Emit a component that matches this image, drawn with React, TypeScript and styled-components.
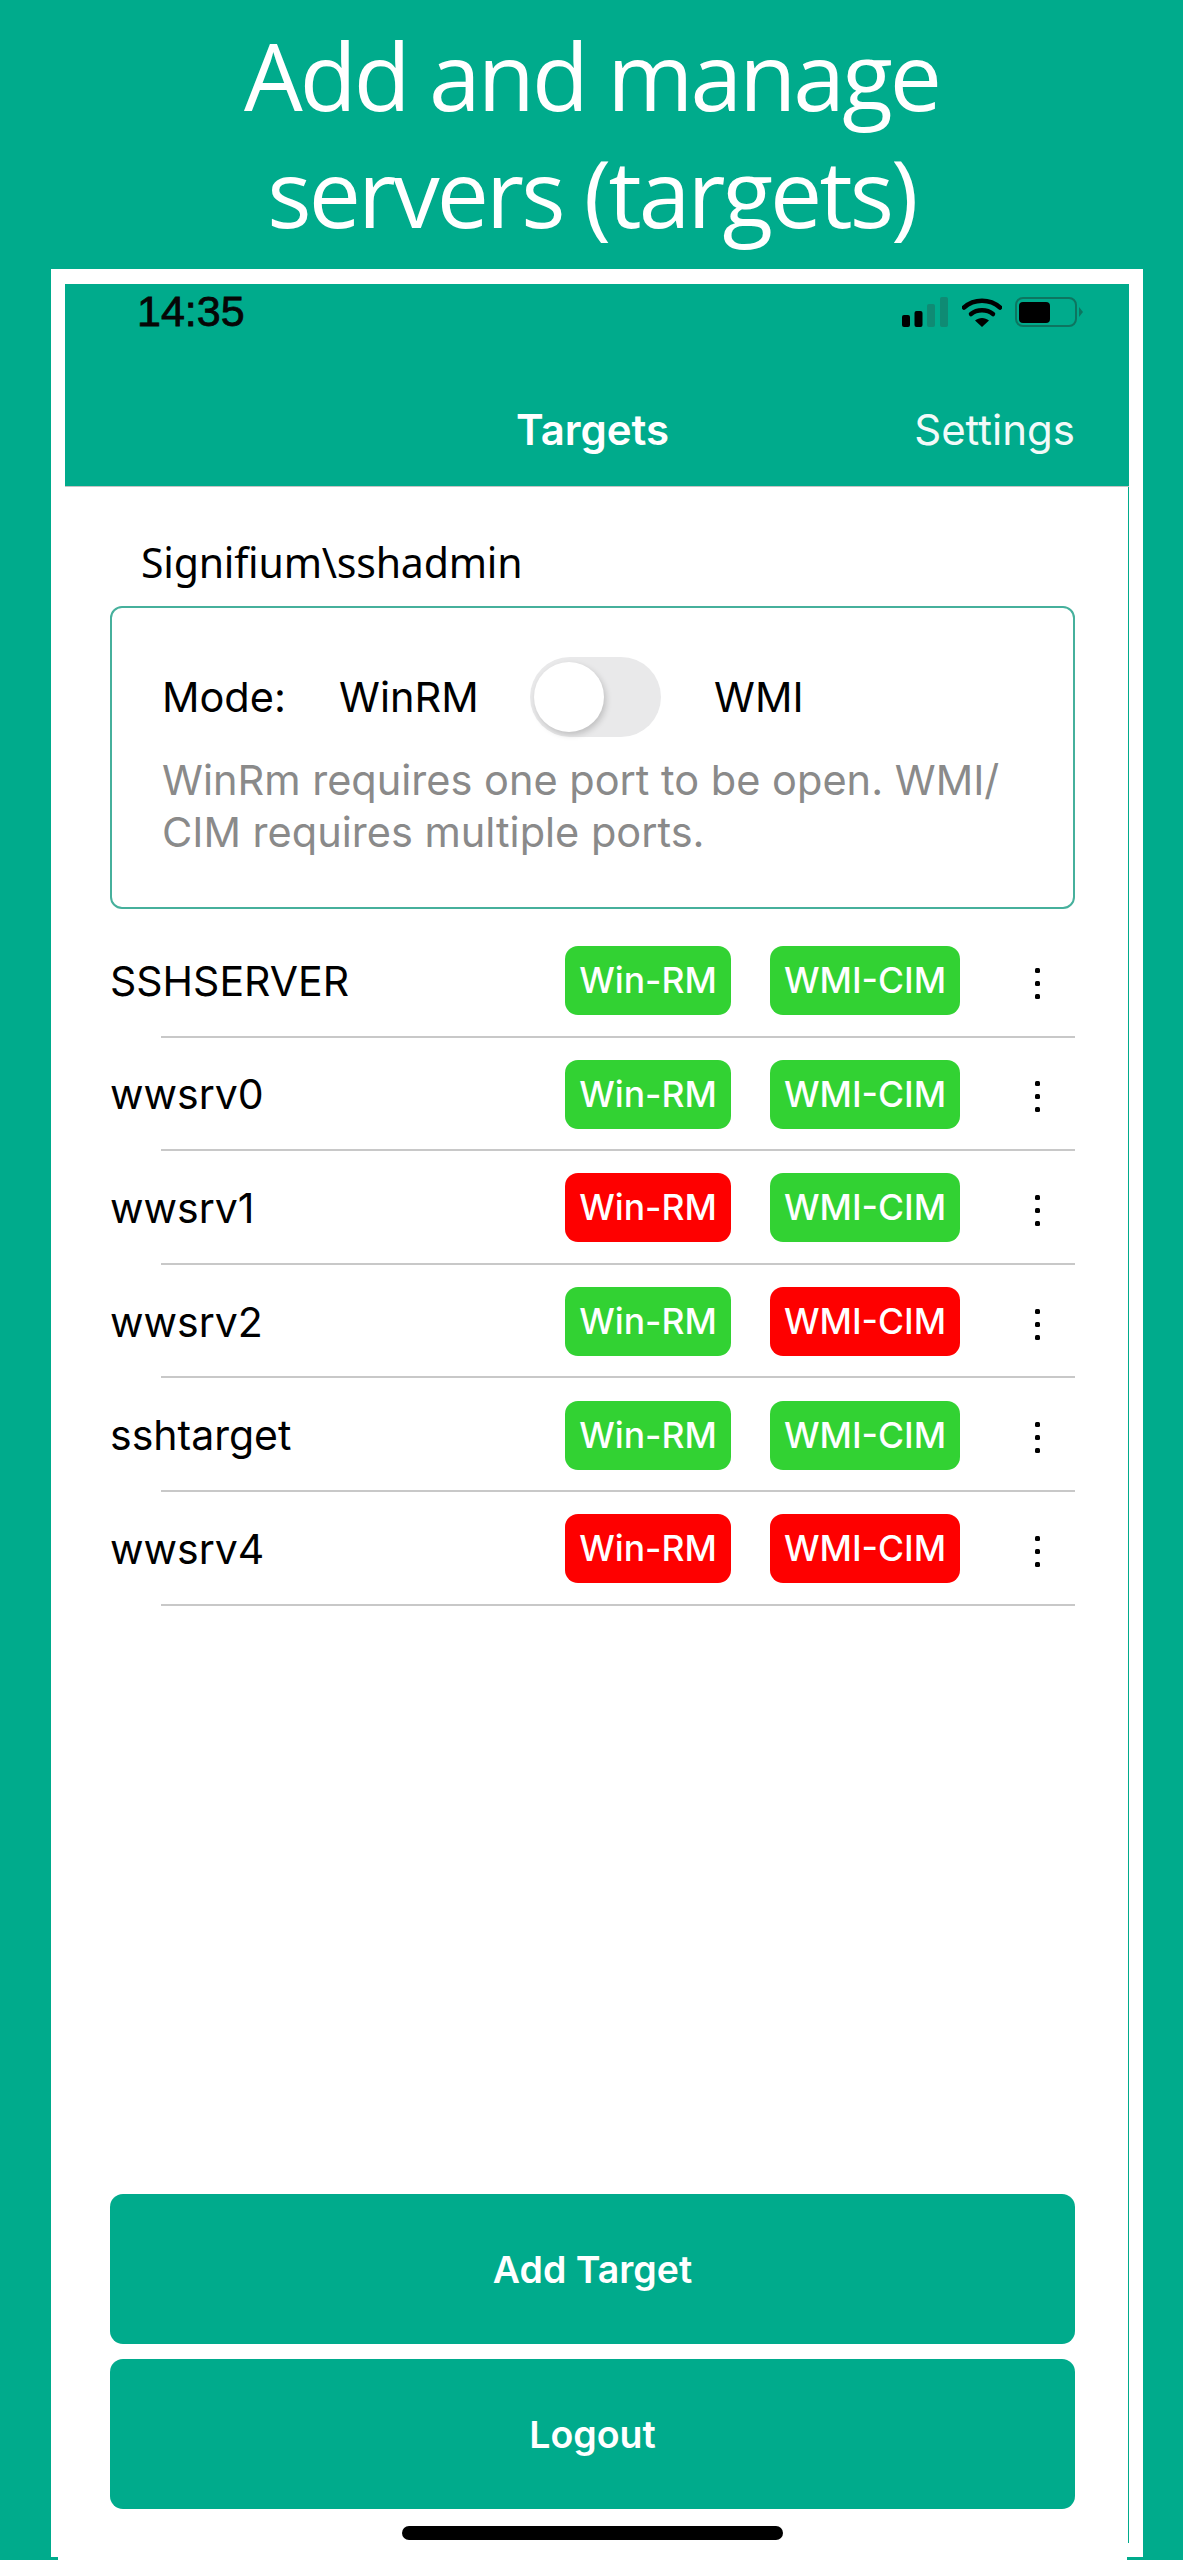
import React, { FC } from 'react';
import styled, { createGlobalStyle } from 'styled-components';

const teal = '#00ab8c';

const GlobalStyle = createGlobalStyle`
  html, body {
    margin: 0;
    padding: 0;
    background: ${teal};
  }
`;

const Page = styled.div`
  width: 1183px;
  height: 2560px;
  overflow: hidden;
  display: flex;
  flex-direction: column;
  background: ${teal};
`;

const Headline = styled.h1`
  margin: 0;
  height: 269px;
  padding-top: 17px;
  box-sizing: border-box;
  font-family: 'Open Sans', sans-serif;
  font-weight: 400;
  font-size: 93px;
  line-height: 117px;
  letter-spacing: -2.9px;
  color: #fff;
  text-align: center;
`;

const Frame = styled.div`
  position: relative;
  flex: 1;
  margin: 0 40px 0 51px;
  border-top: 15px solid #fff;
  border-left: 14px solid #fff;
  border-right: 14px solid #fff;
  display: flex;
  flex-direction: column;
  background: #fff;
  min-height: 0;

  &::before,
  &::after {
    content: '';
    position: absolute;
    bottom: 0;
    height: 3px;
    background: ${teal};
  }

  &::before {
    left: -14px;
    width: 7px;
  }

  &::after {
    right: -14px;
    width: 16px;
  }
`;

const AppBar = styled.header`
  height: 203px;
  flex: none;
  display: flex;
  flex-direction: column;
  background: ${teal};
  border-bottom: 1px solid #c4c4c4;
  box-sizing: border-box;
`;

const StatusBar = styled.div`
  display: flex;
  align-items: center;
  justify-content: space-between;
  padding: 6px 46px 0 72px;
  height: 44px;
`;

const Clock = styled.span`
  font-family: 'Liberation Sans', sans-serif;
  font-size: 43px;
  font-weight: 400;
  line-height: 38px;
  margin-top: -2px;
  color: #060606;
  -webkit-text-stroke: 0.8px #060606;
`;

const StatusIcons = styled.div`
  display: flex;
  align-items: flex-end;
  gap: 13px;
`;

const Nav = styled.nav`
  display: flex;
  justify-content: space-between;
  align-items: baseline;
  padding: 70px 54px 0 451px;
  color: #fff;
  font-family: Inter, sans-serif;
  font-size: 42px;
`;

const NavTitle = styled.span`
  font-weight: 600;
`;

const NavAction = styled.span`
  font-weight: 400;
  opacity: 0.95;
`;

const Content = styled.main`
  position: relative;
  flex: 1;
  display: flex;
  flex-direction: column;
  min-height: 0;
  padding: 0 54px 0 45px;

  &::after {
    content: '';
    position: absolute;
    top: 0;
    right: 0;
    bottom: 17px;
    width: 1px;
    background: ${teal};
  }
`;

const Account = styled.div`
  margin: 47px 0 0 31px;
  height: 72px;
  font-family: 'Noto Sans', sans-serif;
  font-size: 41px;
  line-height: 56px;
  letter-spacing: -0.2px;
  color: #000;
`;

const ModeCard = styled.section`
  height: 303px;
  box-sizing: border-box;
  border: 2px solid #46b09c;
  border-radius: 12px;
  padding: 49px 49px 0 50px;
  font-family: Inter, sans-serif;
`;

const ModeRow = styled.div`
  display: flex;
  align-items: center;
  height: 80px;
  font-size: 41.5px;
  color: #000;
`;

const ModeLabel = styled.span`
  width: 177px;
`;

const ModeOption = styled.span`
  width: 191px;
`;

const Toggle = styled.span`
  position: relative;
  flex: none;
  width: 131px;
  height: 80px;
  margin-right: 53px;
  border-radius: 40px;
  background: #e9e9ea;
`;

const Knob = styled.span`
  position: absolute;
  top: 5px;
  left: 4px;
  width: 70px;
  height: 70px;
  border-radius: 50%;
  background: #fff;
  box-shadow: 2px 3px 6px rgba(0, 0, 0, 0.18);
`;

const ModeHint = styled.p`
  margin: 17px 0 0 0;
  font-size: 41.5px;
  line-height: 52px;
  color: #8a8a8a;
`;

const TargetList = styled.div`
  margin-top: 15px;
  display: flex;
  flex-direction: column;
`;

const TargetRow = styled.div`
  height: 113.6px;
  box-sizing: border-box;
  display: flex;
  align-items: center;
  position: relative;
  font-family: Inter, sans-serif;

  &::after {
    content: '';
    position: absolute;
    left: 51px;
    right: 0;
    bottom: 0;
    height: 2px;
    background: #c8c8c8;
  }
`;

const TargetName = styled.span`
  flex: 1;
  font-size: 41px;
  color: #000;
`;

const StatusBadge = styled.span<{ $ok: boolean; $wide?: boolean }>`
  display: flex;
  align-items: center;
  justify-content: center;
  flex: none;
  width: ${(p) => (p.$wide ? '190px' : '166px')};
  height: 69px;
  margin-left: ${(p) => (p.$wide ? '39px' : '0')};
  border-radius: 13px;
  background: ${(p) => (p.$ok ? '#32d233' : '#fe0000')};
  color: #fff;
  font-size: 35.5px;
  font-weight: 500;
`;

const MoreDots = styled.span`
  flex: none;
  display: flex;
  flex-direction: column;
  gap: 8px;
  margin: 5px 35px 0 75px;
`;

const Dot = styled.i`
  display: block;
  width: 5px;
  height: 5px;
  border-radius: 1.5px;
  background: #000;
`;

const Actions = styled.div`
  margin-top: auto;
  display: flex;
  flex-direction: column;
  gap: 15px;
`;

const ActionButton = styled.button`
  height: 150px;
  border: 0;
  border-radius: 13px;
  background: ${teal};
  color: #fff;
  font-family: Inter, sans-serif;
  font-size: 37.5px;
  font-weight: 600;
`;

const HomeBar = styled.div`
  align-self: center;
  flex: none;
  width: 381px;
  height: 14px;
  margin: 17px 0 20px 0;
  border-radius: 7px;
  background: #000;
`;

const SignalIcon: FC = () => (
  <svg width="47" height="30" viewBox="0 0 47 30">
    <rect x="0" y="18" width="8" height="12" rx="2" fill="#000" />
    <rect x="12.5" y="14" width="8" height="16" rx="2" fill="#000" />
    <rect x="25" y="7" width="8" height="23" rx="2" fill="#0f8b74" />
    <rect x="38" y="0" width="8" height="30" rx="2" fill="#0f8b74" />
  </svg>
);

const WifiIcon: FC = () => (
  <svg width="40" height="30" viewBox="0 0 40 30">
    <path d="M2 10.5C12 1.5 28 1.5 38 10.5" fill="none" stroke="#000" strokeWidth="4.5" strokeLinecap="round" />
    <path d="M9 17C15 12 25 12 31 17" fill="none" stroke="#000" strokeWidth="4.5" strokeLinecap="round" />
    <path d="M13 23.5L20 30L27 23.5C23 20 17 20 13 23.5Z" fill="#000" />
  </svg>
);

const BatteryIcon: FC = () => (
  <svg width="68" height="30" viewBox="0 0 68 30">
    <rect x="1" y="1" width="60" height="28" rx="7" fill="none" stroke="#0d7560" strokeWidth="2" />
    <rect x="4" y="5" width="31" height="21" rx="4" fill="#000" />
    <path d="M64 10L68 15L64 20Z" fill="#0d7560" />
  </svg>
);

const targets = [
  { name: 'SSHSERVER', winrm: true, wmi: true },
  { name: 'wwsrv0', winrm: true, wmi: true },
  { name: 'wwsrv1', winrm: false, wmi: true },
  { name: 'wwsrv2', winrm: true, wmi: false },
  { name: 'sshtarget', winrm: true, wmi: true },
  { name: 'wwsrv4', winrm: false, wmi: false },
];

const App: FC = () => {
  return (
    <Page>
      <GlobalStyle />
      <Headline>
        Add and manage
        <br />
        servers (targets)
      </Headline>
      <Frame>
        <AppBar>
          <StatusBar>
            <Clock>14:35</Clock>
            <StatusIcons>
              <SignalIcon />
              <WifiIcon />
              <BatteryIcon />
            </StatusIcons>
          </StatusBar>
          <Nav>
            <NavTitle>Targets</NavTitle>
            <NavAction>Settings</NavAction>
          </Nav>
        </AppBar>
        <Content>
          <Account>Signifium\sshadmin</Account>
          <ModeCard>
            <ModeRow>
              <ModeLabel>Mode:</ModeLabel>
              <ModeOption>WinRM</ModeOption>
              <Toggle>
                <Knob />
              </Toggle>
              <span>WMI</span>
            </ModeRow>
            <ModeHint>
              WinRm requires one port to be open. WMI/
              <br />
              CIM requires multiple ports.
            </ModeHint>
          </ModeCard>
          <TargetList>
            {targets.map((t) => (
              <TargetRow key={t.name}>
                <TargetName>{t.name}</TargetName>
                <StatusBadge $ok={t.winrm}>Win-RM</StatusBadge>
                <StatusBadge $ok={t.wmi} $wide>
                  WMI-CIM
                </StatusBadge>
                <MoreDots>
                  <Dot />
                  <Dot />
                  <Dot />
                </MoreDots>
              </TargetRow>
            ))}
          </TargetList>
          <Actions>
            <ActionButton>Add Target</ActionButton>
            <ActionButton>Logout</ActionButton>
          </Actions>
          <HomeBar />
        </Content>
      </Frame>
    </Page>
  );
};

export default App;
